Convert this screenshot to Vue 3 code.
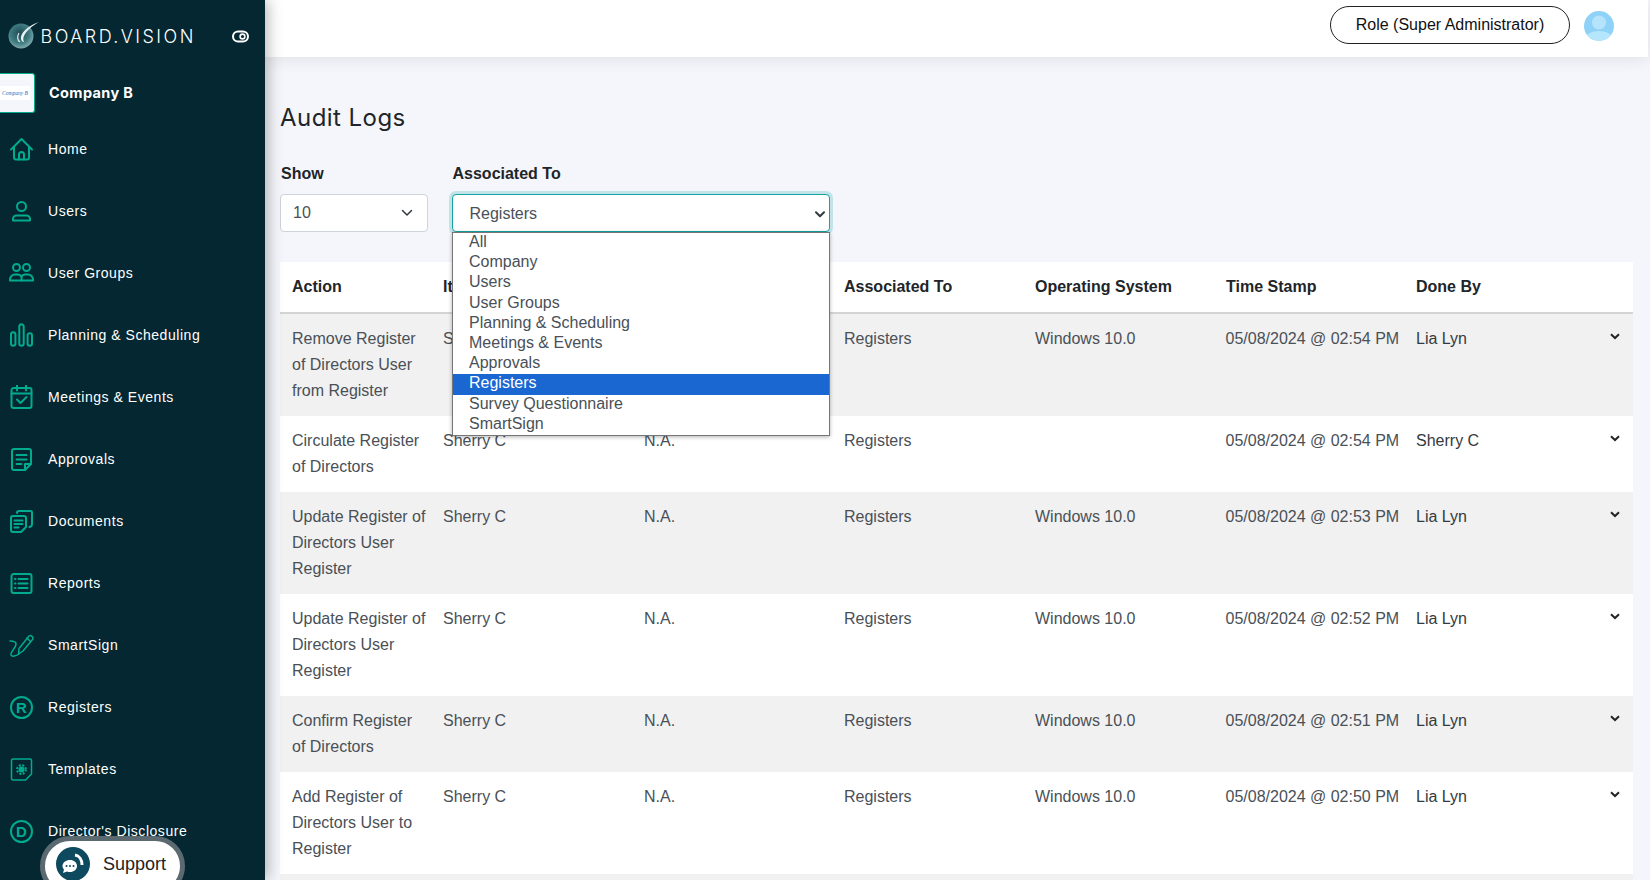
<script setup>
const navItems = [
  { label: 'Home', paths: ['M2 12.5 12.5 2 23 12.5', 'M5 10v10.5a2 2 0 0 0 2 2h11a2 2 0 0 0 2-2V10', 'M10 22.5v-5a2.5 2.5 0 0 1 5 0v5'] },
  { label: 'Users', paths: ['M8 7.5a4.5 4.5 0 1 0 9 0a4.5 4.5 0 1 0-9 0', 'M4 21.5V20a3.5 3.5 0 0 1 3.5-3.5h10A3.5 3.5 0 0 1 21 20v1.5z'] },
  { label: 'User Groups', paths: ['M4 6.5a3.5 3.5 0 1 0 7 0a3.5 3.5 0 1 0-7 0', 'M14 6.5a3.5 3.5 0 1 0 7 0a3.5 3.5 0 1 0-7 0', 'M1 19.5v-1a5 5 0 0 1 5-5h3a4 4 0 0 1 3.5 2 4 4 0 0 1 3.5-2h3a5 5 0 0 1 5 5v1z', 'M12.5 15.5v4'] },
  { label: 'Planning & Scheduling', paths: ['M2 11.5a2.2 2.2 0 0 1 4.4 0v9a2.2 2.2 0 0 1-4.4 0z', 'M10.3 3.5a2.2 2.2 0 0 1 4.4 0v17a2.2 2.2 0 0 1-4.4 0z', 'M18.6 12.5a2.2 2.2 0 0 1 4.4 0v8a2.2 2.2 0 0 1-4.4 0z'] },
  { label: 'Meetings & Events', paths: ['M4.5 3h16a2 2 0 0 1 2 2v16a2 2 0 0 1-2 2h-16a2 2 0 0 1-2-2V5a2 2 0 0 1 2-2z', 'M2.5 8.5h20', 'M8 .5v5', 'M17 .5v5', 'M8 14.5l3.5 3.5 6-6'] },
  { label: 'Approvals', paths: ['M5 2h15a2 2 0 0 1 2 2v13l-6 6H5a2 2 0 0 1-2-2V4a2 2 0 0 1 2-2z', 'M7.5 8h10', 'M7.5 12.5h10', 'M7.5 17h5', 'M16 23v-6h6'] },
  { label: 'Documents', paths: ['M4 7h11a2 2 0 0 1 2 2v9l-5 5H4a2 2 0 0 1-2-2V9a2 2 0 0 1 2-2z', 'M5.5 11.5h8', 'M5.5 15h8', 'M5.5 18.5h4', 'M8 4a2 2 0 0 1 2-2h11.5A1.5 1.5 0 0 1 23 3.5V15a3 3 0 0 1-2.5 3'] },
  { label: 'Reports', paths: ['M4.5 3h16a2 2 0 0 1 2 2v15a2 2 0 0 1-2 2h-16a2 2 0 0 1-2-2V5a2 2 0 0 1 2-2z', 'M9.5 8h9', 'M9.5 12.5h9', 'M9.5 17h9', 'M6 8h.5', 'M6 12.5h.5', 'M6 17h.5'] },
  { label: 'SmartSign', thin: true, paths: ['M14 18 9.5 21l.5-5.5L20 3a2 2 0 0 1 3 .5 2 2 0 0 1 .5 3z', 'M18 5l3.5 3.5', 'M1 8c3 0 6 0 6 3 0 4-6 8-5 11 .8 2.2 5 1 8-1'] },
  { label: 'Registers', letter: 'R', paths: ['M2 12.5a10.5 10.5 0 1 0 21 0a10.5 10.5 0 1 0-21 0'] },
  { label: 'Templates', gear: true, thin: true, paths: ['M4 2h17a1.5 1.5 0 0 1 1.5 1.5V17l-6 6H4a1.5 1.5 0 0 1-1.5-1.5v-18A1.5 1.5 0 0 1 4 2z'] },
  { label: "Director's Disclosure", letter: 'D', paths: ['M2 12.5a10.5 10.5 0 1 0 21 0a10.5 10.5 0 1 0-21 0'] },
]

const options = ['All', 'Company', 'Users', 'User Groups', 'Planning & Scheduling', 'Meetings & Events', 'Approvals', 'Registers', 'Survey Questionnaire', 'SmartSign']

const headers = ['Action', 'Item', 'Details', 'Associated To', 'Operating System', 'Time Stamp', 'Done By']

const rows = [
  { action: 'Remove Register of Directors User from Register', os: 'Windows 10.0', time: '05/08/2024 @ 02:54 PM', by: 'Lia Lyn' },
  { action: 'Circulate Register of Directors', os: '', time: '05/08/2024 @ 02:54 PM', by: 'Sherry C' },
  { action: 'Update Register of Directors User Register', os: 'Windows 10.0', time: '05/08/2024 @ 02:53 PM', by: 'Lia Lyn' },
  { action: 'Update Register of Directors User Register', os: 'Windows 10.0', time: '05/08/2024 @ 02:52 PM', by: 'Lia Lyn' },
  { action: 'Confirm Register of Directors', os: 'Windows 10.0', time: '05/08/2024 @ 02:51 PM', by: 'Lia Lyn' },
  { action: 'Add Register of Directors User to Register', os: 'Windows 10.0', time: '05/08/2024 @ 02:50 PM', by: 'Lia Lyn' },
]
</script>

<template>
  <div class="app">
    <aside class="sidebar">
      <div class="brand">
        <svg class="logo" width="34" height="30" viewBox="0 0 34 30">
          <defs>
            <radialGradient id="lg" cx="0.45" cy="0.4" r="0.65">
              <stop offset="0" stop-color="#1f4a55" />
              <stop offset="0.6" stop-color="#3f7c82" />
              <stop offset="1" stop-color="#8fb4b6" />
            </radialGradient>
          </defs>
          <circle cx="13" cy="15" r="12.5" fill="url(#lg)" />
          <path d="M31 1C22 4 14 10 13 16c-.4 3 1 5 3 5-1-2-1-4 0-6 2-5 8-10 15-14z" fill="#e9f1f1" />
          <path d="M11 12c-2 3-2 7 1 9" fill="none" stroke="#dfe9e9" stroke-width="1.2" />
        </svg>
        <span class="brand-name">BOARD.VISION</span>
        <svg class="toggle" width="17" height="13" viewBox="0 0 17 13">
          <rect x="1" y="1.5" width="15" height="10" rx="5" fill="none" stroke="#fff" stroke-width="2" />
          <circle cx="10.5" cy="6.5" r="2.4" fill="none" stroke="#fff" stroke-width="1.6" />
        </svg>
      </div>

      <div class="company">
        <div class="company-logo"><span>Company B</span></div>
        <span class="company-name">Company B</span>
      </div>

      <nav class="nav">
        <a v-for="item in navItems" :key="item.label" class="nav-item">
          <svg class="nav-icon" :class="{ thin: item.thin }" width="25" height="25" viewBox="0 0 25 25">
            <path v-for="d in item.paths" :key="d" :d="d" />
            <text v-if="item.letter" x="12.5" y="18" text-anchor="middle" class="letter">{{ item.letter }}</text>
            <g v-if="item.gear">
              <circle cx="12.5" cy="12.5" r="3" class="gear-core" />
              <circle cx="12.5" cy="12.5" r="4.4" class="gear-teeth" />
            </g>
          </svg>
          <span>{{ item.label }}</span>
        </a>
      </nav>

      <div class="support">
        <span class="support-icon">
          <svg width="24" height="22" viewBox="0 0 24 22">
            <path d="M9 7c4 0 7 2.6 7 6s-3 6-7 6c-1 0-2-.1-3-.5L2 20l1-3.6C1.700 15.200 1.500 14 1.500 13c0-3.400 3.500-6 7.500-6z" fill="#fff" />
            <circle cx="5.500" cy="13" r="1" fill="#0e4a5e" />
            <circle cx="9" cy="13" r="1" fill="#0e4a5e" />
            <circle cx="12.500" cy="13" r="1" fill="#0e4a5e" />
            <path d="M14 2c4 .6 7 4.500 7 10" fill="none" stroke="#fff" stroke-width="3" />
          </svg>
        </span>
        <span>Support</span>
      </div>
    </aside>

    <div class="content">
      <header class="topbar">
        <div class="role">Role (Super Administrator)</div>
        <svg class="avatar" width="30" height="30" viewBox="0 0 30 30">
          <defs>
            <clipPath id="av"><circle cx="15" cy="15" r="15" /></clipPath>
          </defs>
          <g clip-path="url(#av)">
            <rect width="30" height="30" fill="#8ed2f8" />
            <circle cx="15" cy="11.500" r="7" fill="#b5e3fb" />
            <path d="M0 30c1-7 8-10 15-10s14 3 15 10z" fill="#b5e6fc" />
          </g>
        </svg>
      </header>

      <main class="main">
        <h1 class="title">Audit Logs</h1>

        <div class="filters">
          <div class="field show">
            <label>Show</label>
            <div class="select">
              <span>10</span>
              <svg width="12" height="8" viewBox="0 0 12 8"><path d="M1.500 1.500 6 6l4.500-4.500" /></svg>
            </div>
          </div>
          <div class="field assoc">
            <label>Associated To</label>
            <div class="select focused">
              <span>Registers</span>
              <svg width="10" height="7" viewBox="0 0 10 7"><path d="M1 1.200 5 5.200l4-4" /></svg>
            </div>
            <ul class="dropdown">
              <li v-for="o in options" :key="o" :class="{ active: o === 'Registers' }">{{ o }}</li>
            </ul>
          </div>
        </div>

        <div class="table">
          <div class="row head">
            <div v-for="h in headers" :key="h" class="cell">{{ h }}</div>
          </div>
          <div v-for="(r, i) in rows" :key="i" class="row body">
            <div class="cell action">{{ r.action }}</div>
            <div class="cell">Sherry C</div>
            <div class="cell">N.A.</div>
            <div class="cell">Registers</div>
            <div class="cell">{{ r.os }}</div>
            <div class="cell time">{{ r.time }}</div>
            <div class="cell by">
              <span>{{ r.by }}</span>
              <svg class="chev" width="10" height="7" viewBox="0 0 10 7"><path d="M1 1.200 5 5l4-3.800" /></svg>
            </div>
          </div>
          <div class="row body last"></div>
        </div>
      </main>
    </div>
  </div>
</template>

<style>
html, body { margin: 0; height: 880px; overflow: hidden; background: #f4f6fb; }
</style>

<style scoped>
.app {
  display: flex;
  width: 1650px;
  height: 880px;
  overflow: hidden;
  font-family: "Liberation Sans", Arial, sans-serif;
  background: #f4f6fb;
}

/* Sidebar */
.sidebar {
  position: relative;
  z-index: 3;
  flex: 0 0 265px;
  height: 880px;
  background: #042732;
  box-shadow: 3px 0 14px rgba(0, 0, 0, 0.28);
  color: #fff;
  overflow: hidden;
}
.brand {
  display: flex;
  align-items: center;
  height: 73px;
  padding-left: 8px;
  box-sizing: border-box;
}
.logo { flex: none; margin-top: -2px; }
.brand-name {
  font-family: Inter, "Open Sans", sans-serif;
  font-size: 18px;
  font-weight: 300;
  letter-spacing: 2.45px;
  color: #fff;
  margin-left: -1.5px;
  white-space: nowrap;
}
.toggle { margin-left: auto; margin-right: 16px; flex: none; }
.company {
  display: flex;
  align-items: center;
  height: 40px;
  margin-bottom: 5px;
}
.company-logo {
  width: 34.500px;
  height: 40px;
  box-sizing: border-box;
  background: #f4f6fb;
  border: 1.500px solid #00ab8e;
  border-left: none;
  border-radius: 0 3px 3px 0;
  display: flex;
  align-items: center;
}
.company-logo span {
  width: 30px;
  height: 14px;
  background: #fff;
  color: #2a6fc0;
  font-family: "Liberation Serif", serif;
  font-style: italic;
  font-size: 5.500px;
  line-height: 14px;
  text-align: center;
  white-space: nowrap;
  overflow: hidden;
}
.company-name {
  margin: -2px 0 0 14.500px;
  font-family: Inter, "Open Sans", sans-serif;
  font-size: 14.500px;
  font-weight: 700;
  letter-spacing: 0.35px;
  color: #fff;
}
.nav { display: flex; flex-direction: column; }
.nav-item {
  display: flex;
  align-items: center;
  height: 62px;
  padding-left: 9px;
  font-size: 14px;
  letter-spacing: 0.54px;
  color: #fff;
  white-space: nowrap;
}
.nav-icon {
  flex: none;
  width: 25px;
  height: 25px;
  margin-right: 14px;
  fill: none;
  stroke: #00ab8e;
  stroke-width: 2;
  stroke-linecap: round;
  stroke-linejoin: round;
}
.nav-icon.thin { stroke-width: 1.500px; }
.letter {
  font-family: "Liberation Sans", sans-serif;
  font-size: 15px;
  font-weight: 700;
  letter-spacing: 0;
  fill: #00ab8e;
  stroke: none;
}
.gear-core { fill: #00ab8e; stroke: none; }
.gear-teeth { fill: none; stroke: #00ab8e; stroke-width: 2px; stroke-linecap: butt; stroke-dasharray: 2 1.500; }

.support {
  position: absolute;
  left: 40px;
  top: 836px;
  width: 145px;
  height: 60px;
  box-sizing: border-box;
  border: 5px solid #5b6a70;
  border-radius: 30px;
  background: #fff;
  display: flex;
  align-items: center;
  padding: 0 0 4px 11px;
  color: #222;
  font-size: 18px;
}
.support-icon {
  width: 34px;
  height: 34px;
  border-radius: 50%;
  background: #0e4a5e;
  display: flex;
  align-items: center;
  justify-content: center;
  margin-right: 13px;
  flex: none;
}

/* Content */
.content {
  flex: 1;
  min-width: 0;
  display: flex;
  flex-direction: column;
}
.topbar {
  position: relative;
  z-index: 2;
  height: 57px;
  flex: none;
  margin-right: 2px;
  background: #fff;
  box-shadow: 0 2px 16px rgba(0, 0, 0, 0.09);
  display: flex;
  align-items: flex-start;
  justify-content: flex-end;
  padding: 6px 34px 0 0;
  box-sizing: border-box;
}
.role {
  width: 240px;
  height: 38px;
  box-sizing: border-box;
  border: 1px solid #222;
  border-radius: 19px;
  text-align: center;
  font-size: 16px;
  line-height: 35px;
  color: #111;
}
.avatar { margin: 5px 0 0 14px; flex: none; }

.main {
  padding: 0 17px 0 15px;
}
.title {
  margin: 46px 0 0;
  font-family: Inter, "Open Sans", sans-serif;
  font-size: 24px;
  font-weight: 400;
  letter-spacing: 0.45px;
  line-height: 30px;
  color: #212529;
}
.filters {
  display: flex;
  margin-top: 29px;
}
.field { position: relative; }
.show { width: 148px; margin-right: 24px; }
.assoc { width: 378px; }
.field label {
  display: block;
  font-size: 16px;
  font-weight: 700;
  line-height: 24px;
  padding-left: 1px;
  color: #212529;
  margin-bottom: 8px;
}
.assoc label { padding-left: 0.500px; }
.select {
  height: 38px;
  box-sizing: border-box;
  background: #fff;
  border: 1px solid #ced4da;
  border-radius: 4px;
  display: flex;
  align-items: center;
  justify-content: space-between;
  padding: 0 14px 0 12px;
  font-size: 16px;
  color: #495057;
}
.select svg { fill: none; stroke: #343a40; stroke-width: 1.500px; stroke-linecap: round; stroke-linejoin: round; }
.select.focused {
  border-color: #12a3a3;
  box-shadow: 0 0 0 3px rgba(18, 163, 163, 0.22);
  padding: 2px 4px 0 16.500px;
}
.select.focused svg { stroke-width: 2px; }
.dropdown {
  position: absolute;
  z-index: 5;
  left: 0;
  right: 0;
  top: 70px;
  height: 204px;
  overflow: hidden;
  box-sizing: border-box;
  margin: 0;
  padding: 0;
  list-style: none;
  background: #fff;
  border: 1px solid #767676;
  box-shadow: 0 1px 4px rgba(0, 0, 0, 0.3);
  font-size: 16px;
  color: #495057;
}
.dropdown li {
  height: 20.200px;
  line-height: 18px;
  padding-left: 16px;
}
.dropdown li.active { background: #1a67d2; color: #fff; }

.table {
  margin-top: 30px;
  width: 1353px;
}
.row {
  display: grid;
  grid-template-columns: 151px 201px 200px 191px 191px 190px 1fr;
}
.cell {
  padding: 12px 4px 12px 12px;
  font-size: 16px;
  line-height: 26px;
  color: #495057;
}
.head {
  height: 52px;
  box-sizing: border-box;
  background: #fff;
  border-bottom: 2.500px solid #d3d4d6;
}
.head .cell {
  font-weight: 700;
  color: #212529;
  padding-top: 12px;
  padding-bottom: 0;
}
.body:nth-child(even) { background: #f1f1f1; }
.body:nth-child(odd) { background: #fff; }
.time { padding-left: 11.500px; }
.by {
  display: flex;
  justify-content: space-between;
  align-items: flex-start;
  padding-right: 13px;
  color: #343a40;
}
.chev {
  margin-top: 7px;
  fill: none;
  stroke: #212529;
  stroke-width: 2;
  flex: none;
}
.last { height: 20px; }
</style>
